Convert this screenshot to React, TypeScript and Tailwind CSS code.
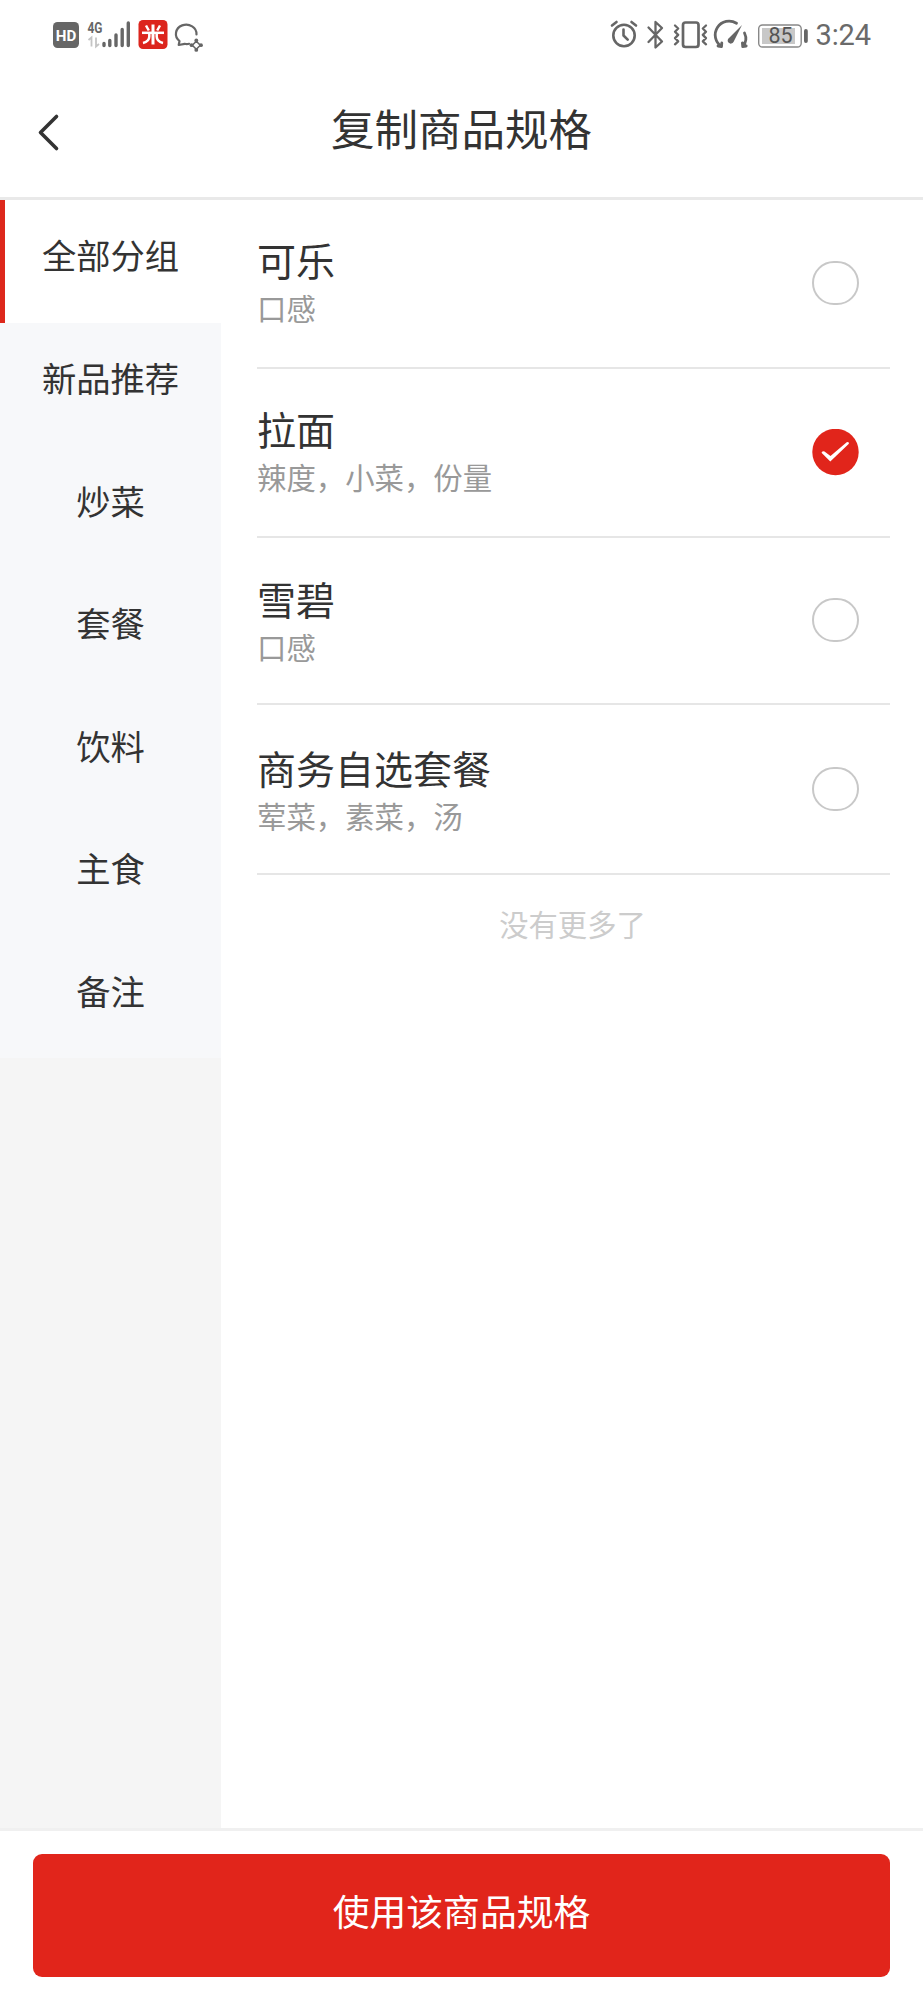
const groups = ['全部分组', '新品推荐', '炒菜', '套餐', '饮料', '主食', '备注'];

const products = [
  { name: '可乐', specs: '口感', checked: false, row: 'h-[169px]', text: 'pb-[4px]' },
  { name: '拉面', specs: '辣度，小菜，份量', checked: true, row: 'h-[169px]', text: 'pb-[3px]' },
  { name: '雪碧', specs: '口感', checked: false, row: 'h-[167px]', text: '' },
  { name: '商务自选套餐', specs: '荤菜，素菜，汤', checked: false, row: 'h-[170px]', text: 'pt-[2px]' },
];

function StatusLeft() {
  return (
    <svg width="170" height="40" viewBox="0 0 170 40" fill="none" className="shrink-0">
      <rect x="3" y="7" width="26" height="26" rx="4.5" fill="#666" />
      <text x="16" y="25.500" textAnchor="middle" fontSize="15.500" fontWeight="700" fill="#fff" textLength="20.500" lengthAdjust="spacingAndGlyphs" fontFamily="Roboto, sans-serif">HD</text>
      <text x="37.5" y="17.5" fontSize="15" fontWeight="700" fill="#666" textLength="15" lengthAdjust="spacingAndGlyphs" fontFamily="Roboto, sans-serif">4G</text>
      <path d="M38.500 25l3-2.500v9M46 22.500v9l3-2.500" stroke="#c4c4c4" strokeWidth="1.800" />
      <path d="M54 28.500v2M59.800 25.500v5M66 20v10.500M72.200 14.500v16M78.300 8v22.500" stroke="#666" strokeWidth="3.400" strokeLinecap="round" />
      <rect x="88.500" y="5" width="29" height="29" rx="4.500" fill="#dc251d" />
      <g stroke="#fff" strokeWidth="2.500">
        <path d="M92 17.800h22" />
        <path d="M103 9.500v20" strokeWidth="3" />
        <path d="M96 10.500l2.800 5M110 10.500l-2.800 5" />
        <path d="M99.300 18.500v3q0 5-6.300 6.500M106.700 18.500v3q0 5 6.300 6.500" />
      </g>
      <g stroke="#666" strokeWidth="2.200" strokeLinecap="round" strokeLinejoin="round">
        <path d="M146.500 19.500A10.300 9.300 0 1 0 129.500 26l-.8 4 6-1.200q2 .8 4.500 0" />
        <path d="M146.300 26.200l4 4-4 4-4-4z" strokeWidth="1.600" />
      </g>
      <g fill="#666">
        <circle cx="146.300" cy="25.500" r="1.900" />
        <circle cx="151" cy="30.200" r="1.900" />
        <circle cx="146.300" cy="34.900" r="1.900" />
        <circle cx="141.600" cy="30.200" r="1.900" />
      </g>
    </svg>
  );
}

function StatusRight() {
  return (
    <svg width="275" height="40" viewBox="0 0 275 40" fill="none" className="shrink-0">
      <g stroke="#666" strokeWidth="2.600" strokeLinecap="round" strokeLinejoin="round">
        <circle cx="23" cy="20.500" r="10.700" />
        <path d="M22.500 14.500v6l4.200 4.200" />
        <path d="M11 10.500l4.500-3.500M35 10.500L30.500 7" />
        <path d="M47.500 12.500L61 26.500l-6.500 6V7l6.500 6-13.500 14" strokeWidth="2.300" />
        <rect x="82" y="7.500" width="15.500" height="24.500" rx="2.500" strokeWidth="2.700" />
        <path d="M74 10.500l3.200 3-3.200 3.200 3.200 3.200-3.200 3.200 3.200 3.200-3.200 3M105 10.500l-3.200 3 3.200 3.200-3.200 3.200 3.200 3.200-3.200 3.200 3.200 3" strokeWidth="2.300" />
        <path d="M135.500 8.300A13.800 13.800 0 0 0 120.500 31.500l.3-3.500M120.500 31.500l-3.500-.5M143.500 18q3.500 7.500-1.800 13.500l-.3-3.500M141.700 31.500l3.500-.5" strokeWidth="2.800" />
      </g>
      <path d="M141 10l-8.500 17a3.100 3.100 0 1 1-4.500-4z" fill="#666" />
      <rect x="157.700" y="10" width="42.500" height="22" rx="3.800" stroke="#888" strokeWidth="1.400" />
      <rect x="161" y="13" width="33" height="16" fill="#c8c8c8" />
      <rect x="203" y="14" width="3.800" height="14" rx="1.900" fill="#666" />
      <text x="179.500" y="28" textAnchor="middle" fontSize="21.500" fill="#555" fontFamily="Roboto, sans-serif">85</text>
      <text x="214.500" y="30.200" fontSize="29" fill="#6a6a6a" textLength="55.500" fontFamily="Roboto, sans-serif">3:24</text>
    </svg>
  );
}

function Radio({ checked }: { checked: boolean }) {
  if (!checked) {
    return <span className="mb-px h-[44px] w-[47px] rounded-[22px] border-2 border-[#c8c8c8]" />;
  }
  return (
    <svg width="47" height="47" viewBox="0 0 47 47" fill="none" className="mb-px">
      <circle cx="23.500" cy="23" r="23.200" fill="#e1251b" />
      <path d="M9.500 23.800q1-2 3-1.300l6 4.500L34.700 13.200q2.600-.8 2.200 1.600L18.300 32.500z" fill="#fff" />
    </svg>
  );
}

export default function App() {
  return (
    <div className="flex h-[2000px] w-[923px] flex-col overflow-hidden bg-white font-['Noto_Sans_CJK_SC',sans-serif] text-[#333]">
      <div className="flex h-[70px] items-start justify-between pt-[15px] pr-[47px] pl-[50px]">
        <StatusLeft />
        <StatusRight />
      </div>

      <header className="grid h-[130px] grid-cols-[100px_1fr_100px] items-center border-b-[3px] border-[#e9e9e9]">
        <svg width="24" height="40" viewBox="0 0 24 40" fill="none" className="mb-[3px] ml-[36px]">
          <path d="M20.500 4.500L4.500 20.500l16 16" stroke="#333" strokeWidth="3.600" strokeLinecap="round" strokeLinejoin="round" />
        </svg>
        <h1 className="pb-[11px] text-center text-[43.5px] leading-[60px]">复制商品规格</h1>
      </header>

      <main className="flex min-h-0 flex-1">
        <nav className="w-[221px] shrink-0 bg-[#f5f5f5]">
          {groups.map((group, i) => (
            <div
              key={group}
              className={
                i === 0
                  ? 'flex h-[122.5px] items-center justify-center border-l-[5px] border-[#dd281c] bg-white pr-[5px] pb-[13px] text-[34.3px]'
                  : 'flex h-[122.5px] items-center justify-center bg-[#f7f8fa] pb-[12px] text-[34.3px]'
              }
            >
              {group}
            </div>
          ))}
        </nav>

        <section className="flex flex-1 flex-col pr-[33px] pl-[36px]">
          {products.map((product) => (
            <div key={product.name} className={`flex items-center justify-between border-b-2 border-[#e6e6e6] pr-[31px] ${product.row}`}>
              <div className={product.text}>
                <div className="text-[39px] leading-[50px]">{product.name}</div>
                <div className="text-[29.4px] leading-[46px] text-[#999]">{product.specs}</div>
              </div>
              <Radio checked={product.checked} />
            </div>
          ))}
          <p className="pt-[26px] pr-[2px] text-center text-[29.3px] leading-[44px] text-[#ccc]">没有更多了</p>
        </section>
      </main>

      <footer className="h-[172px] border-t-[3px] border-[#f0f0f0] px-[33px] pt-[23px]">
        <button className="flex h-[123px] w-full items-center justify-center rounded-[9px] bg-[#e1251b] pb-[10px] text-[36.8px] text-white">
          使用该商品规格
        </button>
      </footer>
    </div>
  );
}
